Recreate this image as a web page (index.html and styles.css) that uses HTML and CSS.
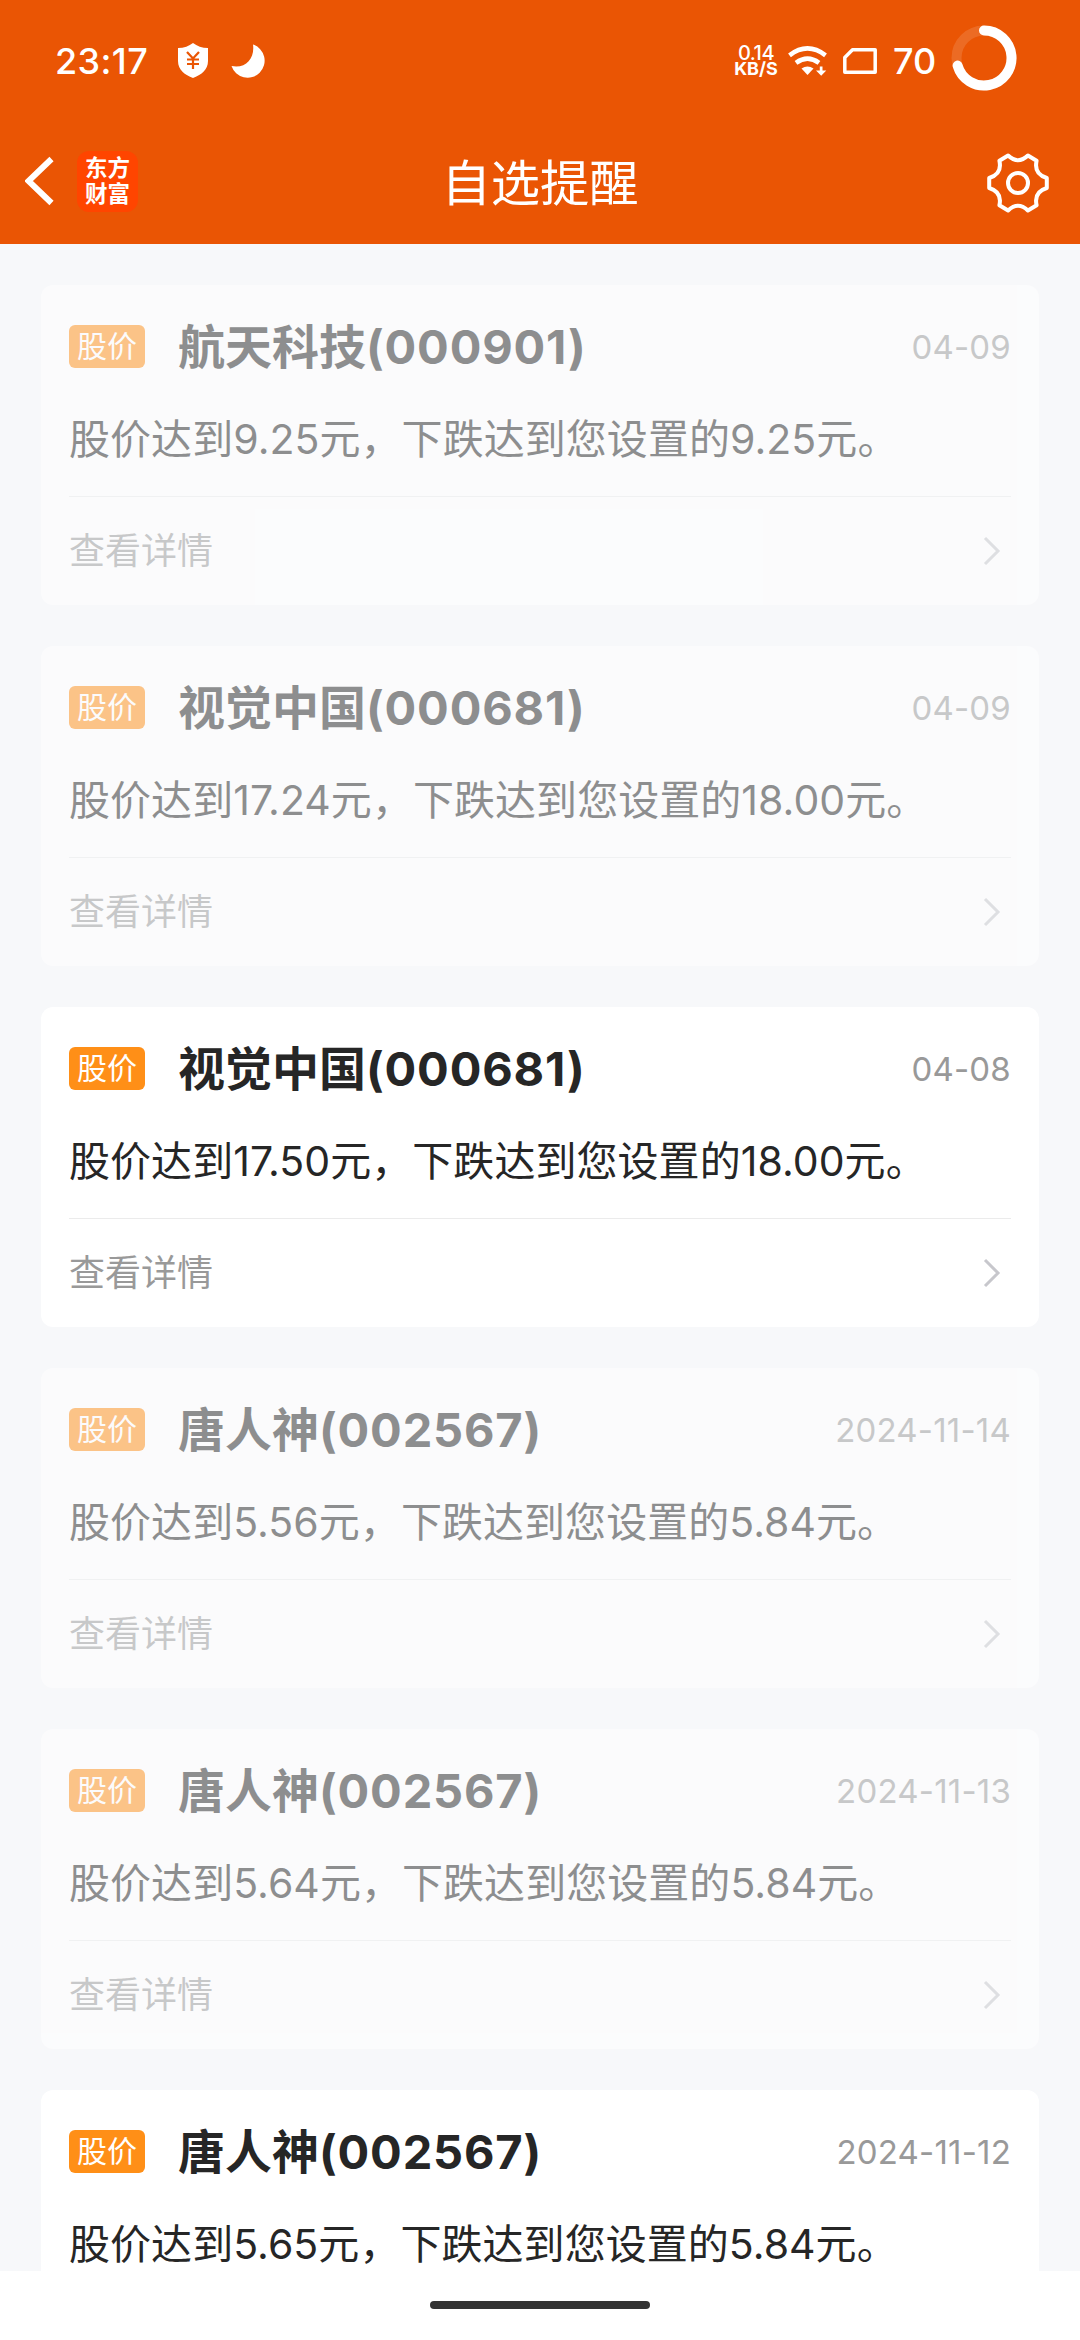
FILE: index.html
```html
<!DOCTYPE html>
<html lang="zh-CN">
<head>
<meta charset="utf-8">
<title>自选提醒</title>
<link rel="stylesheet" href="styles.css">
</head>
<body>
<div class="screen">
  <header class="top">
    <div class="status">
      <span class="time">23:17</span>
      <svg class="shield" width="30" height="35" viewBox="0 0 30 35"><path d="M15 0C11 3 6 5 0 5V18C0 27 7 32 15 35C23 32 30 27 30 18V5C24 5 19 3 15 0Z" fill="#fff"/><path d="M9 9L15 15.500L21 9M9 16.500H21M9 21H21M15 15V26" fill="none" stroke="#ea5504" stroke-width="2.200"/></svg>
      <svg class="moon" width="34" height="34" viewBox="0 0 34 34"><path d="M22 .5A17 17 0 1 1 .5 22C15 25 24 14 22 .5Z" fill="#fff"/></svg>
      <span class="speed"><span class="speed-num">0.14</span><span class="speed-unit">KB/S</span></span>
      <svg class="wifi" width="40" height="30" viewBox="0 0 40 30"><g fill="none" stroke="#fff" stroke-width="4.600"><path d="M1.500 9.300Q19.500-4.500 37.500 9.300"/><path d="M8 16.800Q19.500 8.500 31 16.800"/></g><path d="M13.500 22.500Q19.500 18.500 25.500 22.500L19.500 29Z" fill="#fff"/><path d="M31.800 20.500H34.500V24.500H38.300L33.200 29.800L28 24.500H31.800Z" fill="#fff"/></svg>
      <svg class="sim" width="34" height="26" viewBox="0 0 34 26"><path d="M9.500 1.800H32.200V24.200H1.800V9.500Z" fill="none" stroke="#fff" stroke-width="3.500" stroke-linejoin="round"/></svg>
      <span class="level">70</span>
      <svg class="ring" width="66" height="66" viewBox="0 0 66 66"><g fill="none" stroke="#fff" stroke-width="10"><circle cx="33" cy="33" r="27.500" opacity=".13"/><path d="M33 5.500A27.500 27.500 0 1 1 6.600 40.600" stroke-linecap="round"/></g></svg>
    </div>
    <nav class="bar">
      <div class="bar-left">
        <svg class="back" width="30" height="50" viewBox="0 0 30 50"><path d="M26.500 3L3.500 25L26.500 47" fill="none" stroke="#fff" stroke-width="6"/></svg>
        <div class="logo"><span>东方</span><span>财富</span></div>
      </div>
      <h1 class="title">自选提醒</h1>
      <svg class="gear" width="62" height="60" viewBox="-31 -30 62 60"><g fill="none" stroke="#fff" stroke-width="4" stroke-linejoin="round"><path d="M28.800-5V5Q15.600 9 18.600 22.200L9.900 27.500Q0 18-9.900 27.500L-18.600 22.200Q-15.600 9-28.800 5V-5Q-15.600-9-18.600-22.200L-9.900-27.500Q0-18 9.900-27.500L18.600-22.200Q15.600-9 28.800-5Z"/><circle r="10"/></g></svg>
    </nav>
  </header>

  <main class="list">
    <article class="card read">
      <div class="head"><span class="tag">股价</span><h2 class="name">航天科技<span class="code">(000901)</span></h2><time class="date">04-09</time></div>
      <p class="text">股价达到9.25元，下跌达到您设置的9.25元。</p>
      <div class="more"><span>查看详情</span><svg class="arrow" width="18" height="30" viewBox="0 0 18 30"><path d="M2 2L15 15L2 28"/></svg></div>
    </article>
    <article class="card read">
      <div class="head"><span class="tag">股价</span><h2 class="name">视觉中国<span class="code">(000681)</span></h2><time class="date">04-09</time></div>
      <p class="text">股价达到17.24元，下跌达到您设置的18.00元。</p>
      <div class="more"><span>查看详情</span><svg class="arrow" width="18" height="30" viewBox="0 0 18 30"><path d="M2 2L15 15L2 28"/></svg></div>
    </article>
    <article class="card">
      <div class="head"><span class="tag">股价</span><h2 class="name">视觉中国<span class="code">(000681)</span></h2><time class="date">04-08</time></div>
      <p class="text">股价达到17.50元，下跌达到您设置的18.00元。</p>
      <div class="more"><span>查看详情</span><svg class="arrow" width="18" height="30" viewBox="0 0 18 30"><path d="M2 2L15 15L2 28"/></svg></div>
    </article>
    <article class="card read">
      <div class="head"><span class="tag">股价</span><h2 class="name">唐人神<span class="code">(002567)</span></h2><time class="date">2024-11-14</time></div>
      <p class="text">股价达到5.56元，下跌达到您设置的5.84元。</p>
      <div class="more"><span>查看详情</span><svg class="arrow" width="18" height="30" viewBox="0 0 18 30"><path d="M2 2L15 15L2 28"/></svg></div>
    </article>
    <article class="card read">
      <div class="head"><span class="tag">股价</span><h2 class="name">唐人神<span class="code">(002567)</span></h2><time class="date">2024-11-13</time></div>
      <p class="text">股价达到5.64元，下跌达到您设置的5.84元。</p>
      <div class="more"><span>查看详情</span><svg class="arrow" width="18" height="30" viewBox="0 0 18 30"><path d="M2 2L15 15L2 28"/></svg></div>
    </article>
    <article class="card">
      <div class="head"><span class="tag">股价</span><h2 class="name">唐人神<span class="code">(002567)</span></h2><time class="date">2024-11-12</time></div>
      <p class="text">股价达到5.65元，下跌达到您设置的5.84元。</p>
    </article>
  </main>

  <footer class="home"><div class="pill"></div></footer>
</div>
</body>
</html>
```
FILE: styles.css
```css
* { box-sizing: border-box; margin: 0; padding: 0; }
body { font-family: Inter, "Noto Sans CJK SC", sans-serif; color: #262626; }
svg { display: block; flex: none; }

.screen {
  width: 1080px;
  height: 2340px;
  display: flex;
  flex-direction: column;
  overflow: hidden;
  background: #f7f8fa;
}

/* header */
.top { flex: none; height: 244px; background: #ea5504; color: #fff; }
.status {
  height: 121px;
  padding: 0 63px 0 55px;
  display: flex;
  align-items: center;
  line-height: 40px;
}
.time { width: 123px; font-size: 36px; font-weight: 500; letter-spacing: .4px; }
.moon { margin-left: 23px; }
.speed {
  margin-left: auto;
  width: 44px;
  display: flex;
  flex-direction: column;
  align-items: center;
  line-height: 15px;
  white-space: nowrap;
}
.speed-num { font-size: 20px; font-weight: 500; letter-spacing: -.5px; }
.speed-unit { font-size: 18px; font-weight: 700; }
.wifi { margin-left: 10px; }
.sim { margin-left: 15px; }
.level { width: 60px; padding-left: 16px; font-size: 36px; font-weight: 500; }
.ring { margin: -6px 0 0 14px; }

.bar {
  height: 123px;
  padding: 0 31px;
  display: grid;
  grid-template-columns: 1fr auto 1fr;
  align-items: center;
}
.bar-left { display: flex; align-items: center; gap: 22px; margin: -3px 0 0 -6px; }
.logo {
  width: 61px;
  height: 61px;
  border-radius: 12px;
  background: #ff4500;
  display: flex;
  flex-direction: column;
  align-items: center;
  justify-content: center;
  padding-bottom: 1px;
  font-size: 22.5px;
  line-height: 26px;
  font-weight: 700;
}
.title { font-size: 49.3px; line-height: 60px; font-weight: 400; }
.gear { justify-self: end; }

/* alert cards */
.list {
  flex: 1;
  min-height: 0;
  overflow: hidden;
  padding: 41px 41px 0;
  display: flex;
  flex-direction: column;
  gap: 41px;
}
.card { flex: none; height: 320px; padding: 0 28px; border-radius: 12px; background: #fff; }
.read { opacity: .5; }
.head { height: 124px; display: flex; align-items: center; }
.tag {
  width: 76px;
  height: 43px;
  margin-bottom: 1px;
  border-radius: 6px;
  background: #ff8f17;
  color: #fff;
  font-size: 30px;
  line-height: 43px;
  text-align: center;
}
.name { margin-left: 33px; font-size: 47px; line-height: 60px; font-weight: 700; }
.code { letter-spacing: .85px; }
.date { margin-left: auto; font-size: 33px; line-height: 40px; letter-spacing: .2px; color: #999; }
.text { height: 87px; font-size: 41px; line-height: 60px; letter-spacing: .05px; white-space: nowrap; }
.more {
  height: 109px;
  border-top: 1px solid #ebebeb;
  padding-right: 10px;
  display: flex;
  align-items: center;
  justify-content: space-between;
  font-size: 36px;
  line-height: 40px;
  color: #999;
}
.arrow { fill: none; stroke: #c7c7cc; stroke-width: 3; }

/* gesture bar */
.home { flex: none; height: 69px; background: #fff; display: flex; justify-content: center; padding-top: 30px; }
.pill { width: 220px; height: 8px; border-radius: 4px; background: #333; }
```
